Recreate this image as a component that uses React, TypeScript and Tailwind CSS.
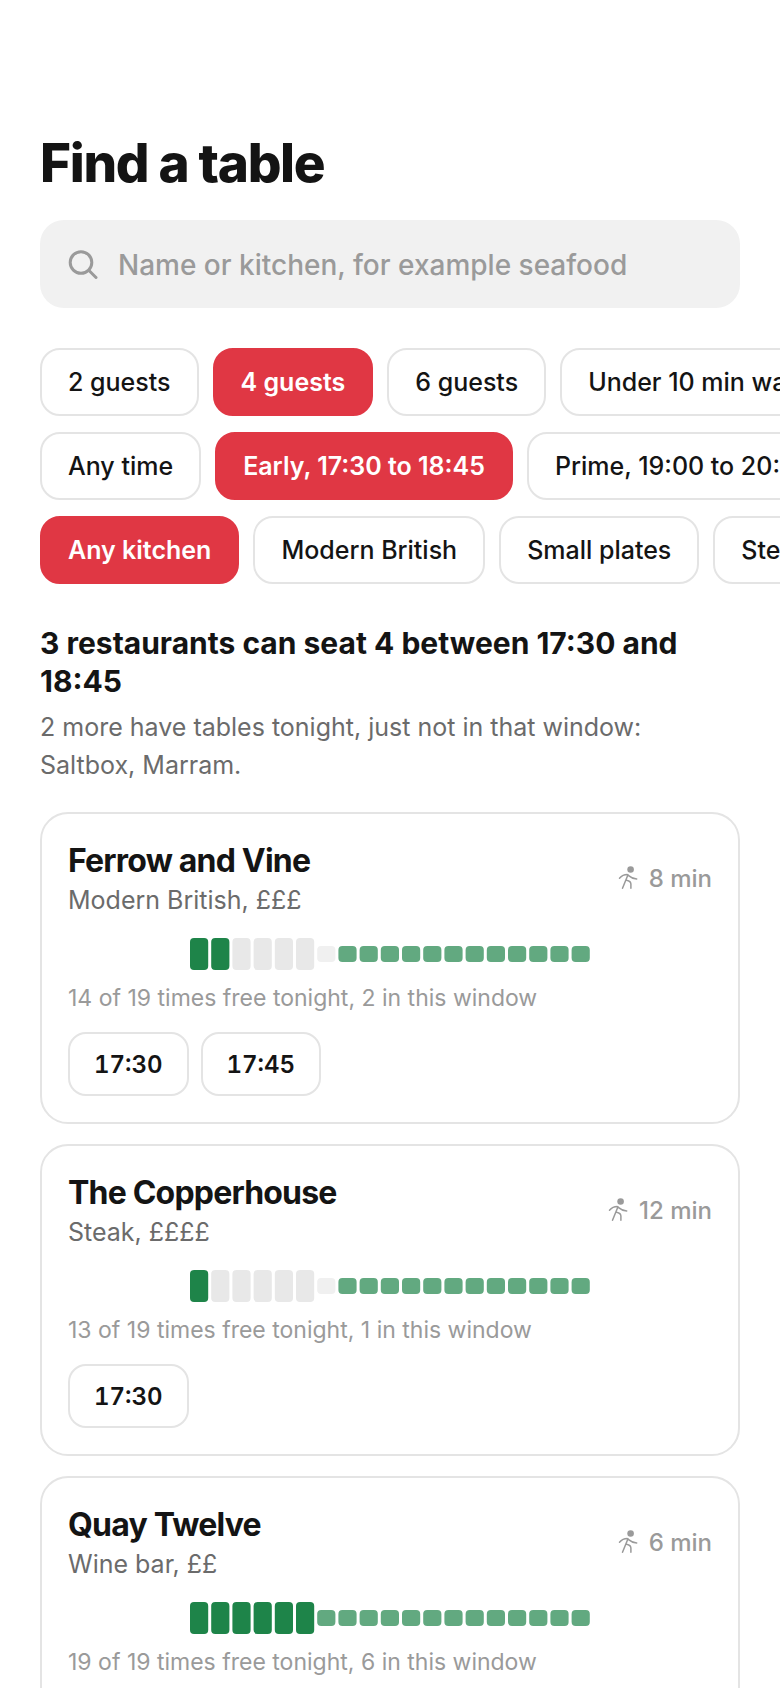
import React, { useState } from 'react';
import clsx from 'clsx';

interface Restaurant {
  name: string;
  kitchen: string;
  walk: number;
  free: string;
  slots: string[];
}

// One character per quarter hour from 17:30: 1 is free, 0 is taken
const restaurants: Restaurant[] = [
  { name: 'Ferrow and Vine', kitchen: 'Modern British, £££', walk: 8, free: '1100000111111111111', slots: ['17:30', '17:45'] },
  { name: 'The Copperhouse', kitchen: 'Steak, ££££', walk: 12, free: '1000000111111111111', slots: ['17:30'] },
  { name: 'Quay Twelve', kitchen: 'Wine bar, ££', walk: 6, free: '1111111111111111111', slots: ['17:30', '17:45', '18:00', '18:15', '18:30', '18:45'] },
];

const WINDOW_SIZE = 6;
const BAR_PITCH = 21.2;

const filterRows = [
  { label: 'Guests and distance', options: ['2 guests', '4 guests', '6 guests', 'Under 10 min walk'], initial: '4 guests' },
  { label: 'Time', options: ['Any time', 'Early, 17:30 to 18:45', 'Prime, 19:00 to 20:30'], initial: 'Early, 17:30 to 18:45' },
  { label: 'Kitchen', options: ['Any kitchen', 'Modern British', 'Small plates', 'Steak'], initial: 'Any kitchen' },
];

function SearchIcon() {
  return (
    <svg viewBox="0 0 30 30" className="w-[30px] h-[30px] shrink-0" fill="none" stroke="currentColor" strokeWidth="3" strokeLinecap="round" aria-hidden="true">
      <circle cx="13" cy="13.5" r="10.8" />
      <path d="M21 21.5l7 7" />
    </svg>
  );
}

function WalkIcon() {
  return (
    <svg viewBox="0 0 26 26" className="w-[26px] h-[26px]" fill="none" stroke="currentColor" strokeWidth="1.5" strokeLinecap="round" strokeLinejoin="round" aria-hidden="true">
      <circle cx="13.6" cy="3.5" r="3.3" fill="currentColor" stroke="none" />
      <path d="M2.5 12.3C4.5 10 7 8.6 10.3 8.6C12.3 9.5 13.5 12.6 19.7 13" />
      <path d="M10.9 9L5.5 22.3M9.6 14.3C12 14.8 13.9 16 13.9 18V22.3" />
    </svg>
  );
}

function FilterRow({ label, options, initial }: { label: string; options: string[]; initial: string }) {
  const [selected, setSelected] = useState(initial);

  return (
    <div role="group" aria-label={label} className="flex gap-3.5 px-10 overflow-x-auto [scrollbar-width:none]">
      {options.map((option) => (
        <button
          key={option}
          type="button"
          aria-pressed={option === selected}
          onClick={() => setSelected(option)}
          className={clsx(
            'h-[68px] shrink-0 rounded-[20px] border-2 px-[26px] pt-0.5 text-[25px] whitespace-nowrap',
            option === selected ? 'border-[#e03744] bg-[#e03744] font-semibold text-white' : 'border-[#e4e4e4] bg-white font-medium'
          )}
        >
          {option}
        </button>
      ))}
    </div>
  );
}

function barColor(free: boolean, inWindow: boolean) {
  if (inWindow) return free ? 'fill-[#1e8449]' : 'fill-[#e8e8e8]';
  return free ? 'fill-[#62a980]' : 'fill-[#f0f0f0]';
}

function Availability({ free }: { free: string }) {
  return (
    <svg viewBox="0 0 400 32" className="h-8 w-full" role="img" aria-label="Free times tonight">
      {free.split('').map((slot, i) => {
        const inWindow = i < WINDOW_SIZE;
        return (
          <rect
            key={i}
            x={i * BAR_PITCH}
            y={inWindow ? 0 : 8}
            width="18.2"
            height={inWindow ? 32 : 16}
            rx="4"
            className={barColor(slot === '1', inWindow)}
          />
        );
      })}
    </svg>
  );
}

function RestaurantCard({ name, kitchen, walk, free, slots }: Restaurant) {
  const total = free.split('').filter((slot) => slot === '1').length;

  return (
    <article className="rounded-[28px] border-2 border-[#e4e4e4] p-[26px]">
      <div className="flex items-center justify-between">
        <div>
          <h3 className="text-[32px] leading-[42px] font-bold tracking-tight">{name}</h3>
          <p className="text-[25px] leading-9 text-[#6b6b6b]">{kitchen}</p>
        </div>
        <p className="flex items-center gap-1.5 text-2xl font-medium text-[#9a9a9a]">
          <WalkIcon />
          {walk} min
        </p>
      </div>
      <div className="mt-5">
        <Availability free={free} />
      </div>
      <p className="mt-3 text-[23px] leading-8 text-[#9a9a9a]">
        {total} of {free.length} times free tonight, {slots.length} in this window
      </p>
      <div className="mt-[18px] flex flex-wrap gap-3">
        {slots.map((slot) => (
          <button key={slot} type="button" className="h-16 rounded-[18px] border-2 border-[#e4e4e4] px-6 pt-0.5 text-2xl font-semibold tabular-nums">
            {slot}
          </button>
        ))}
      </div>
    </article>
  );
}

export default function App() {
  const [query, setQuery] = useState('');

  return (
    <main className="min-h-screen bg-white pt-[132px] pb-10 text-[#141414] font-['Inter',sans-serif] [font-optical-sizing:none]">
      <header className="px-10">
        <h1 className="text-[53px] leading-[62px] font-extrabold tracking-tight">Find a table</h1>
        <label className="mt-[26px] flex h-[88px] items-center gap-5 rounded-3xl bg-[#f1f1f1] px-7 text-[#9a9a9a]">
          <SearchIcon />
          <input
            type="search"
            aria-label="Search restaurants"
            value={query}
            onChange={(e) => setQuery(e.target.value)}
            placeholder="Name or kitchen, for example seafood"
            className="min-w-0 flex-1 bg-transparent pt-0.5 text-[28px] font-medium text-[#141414] outline-none placeholder:text-[#9a9a9a]"
          />
        </label>
      </header>

      <div className="mt-10 flex flex-col gap-4">
        {filterRows.map((row) => (
          <FilterRow key={row.label} {...row} />
        ))}
      </div>

      <section className="mt-10 px-10">
        <h2 className="text-[30px] leading-[38px] font-bold">3 restaurants can seat 4 between 17:30 and 18:45</h2>
        <p className="mt-2 text-[25px] leading-[38px] text-[#6b6b6b]">
          2 more have tables tonight, just not in that window: Saltbox, Marram.
        </p>
        <div className="mt-7 flex flex-col gap-5">
          {restaurants.map((restaurant) => (
            <RestaurantCard key={restaurant.name} {...restaurant} />
          ))}
        </div>
      </section>
    </main>
  );
}
